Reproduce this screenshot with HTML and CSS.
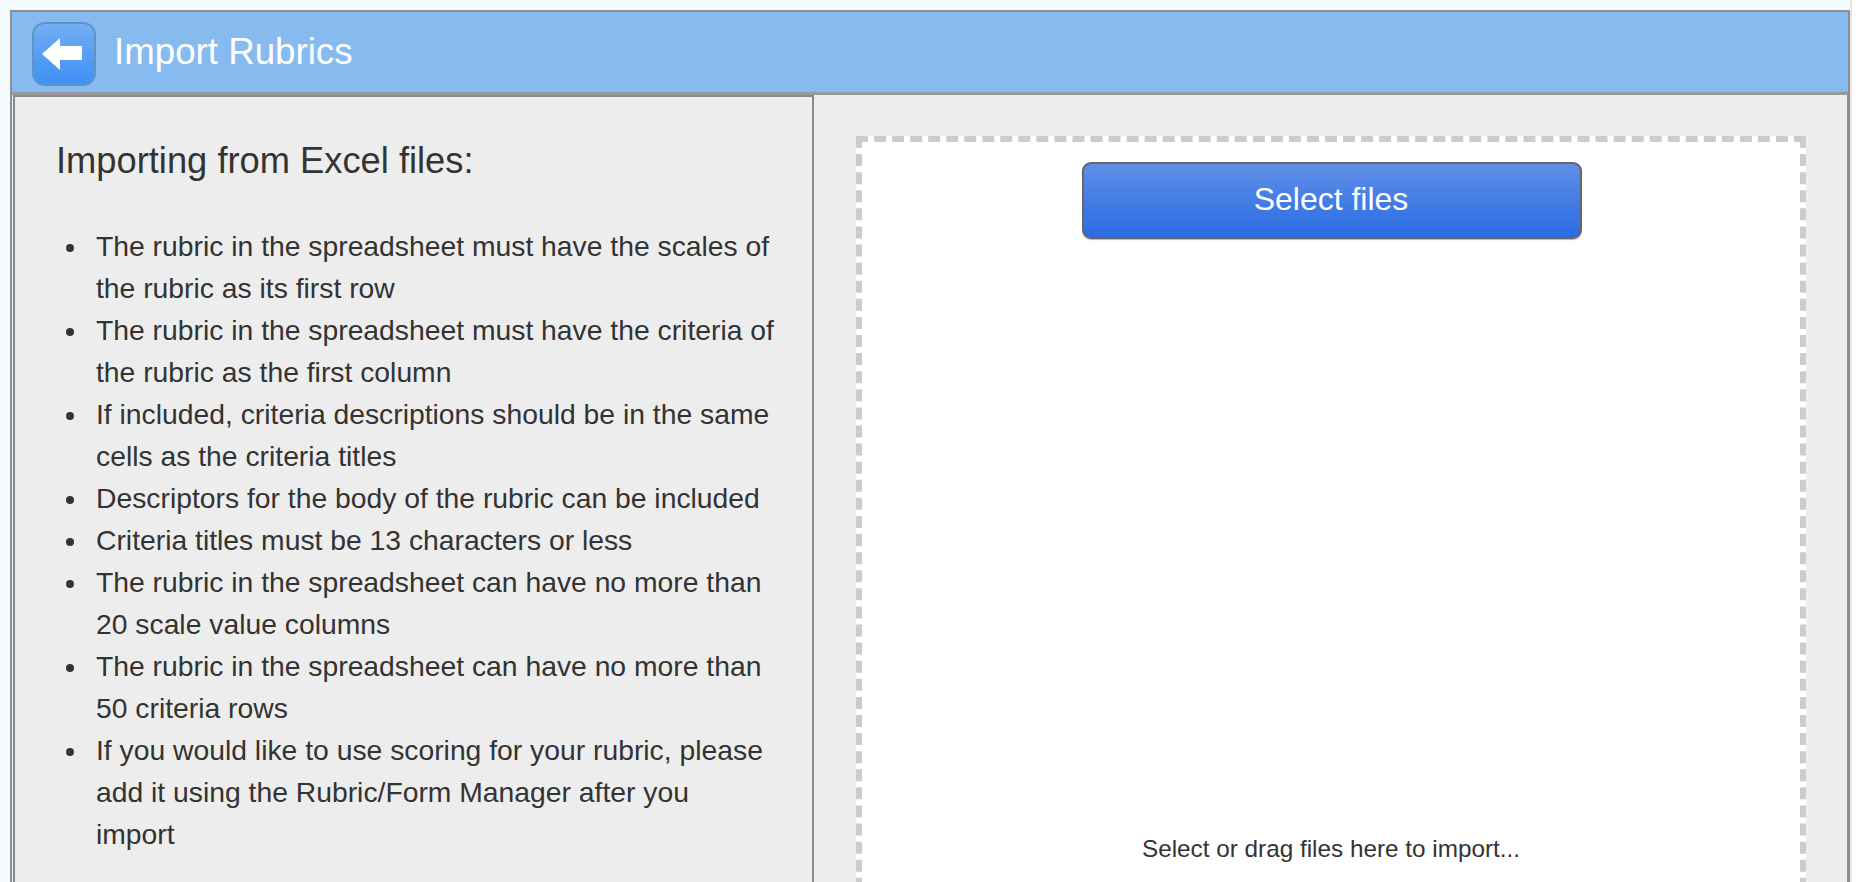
FILE: index.html
```html
<!DOCTYPE html>
<html lang="en">
<head>
<meta charset="utf-8">
<title>Import Rubrics</title>
<link rel="stylesheet" href="styles.css">
</head>
<body>
<div class="page">
<div class="window">
  <header class="titlebar">
    <button class="back" aria-label="Back">
      <svg width="40" height="32" viewBox="0 0 40 32"><path d="M0 16 L18 0 V8 H40 V22 H18 V32 Z" fill="#fff"/></svg>
    </button>
    <h1 class="title">Import Rubrics</h1>
  </header>
  <main class="content">
    <section class="help">
      <h2 class="help-title">Importing from Excel files:</h2>
      <ul class="rules">
        <li>The rubric in the spreadsheet must have the scales of the rubric as its first row</li>
        <li>The rubric in the spreadsheet must have the criteria of the rubric as the first column</li>
        <li>If included, criteria descriptions should be in the same cells as the criteria titles</li>
        <li>Descriptors for the body of the rubric can be included</li>
        <li>Criteria titles must be 13 characters or less</li>
        <li>The rubric in the spreadsheet can have no more than 20 scale value columns</li>
        <li>The rubric in the spreadsheet can have no more than 50 criteria rows</li>
        <li>If you would like to use scoring for your rubric, please add it using the Rubric/Form Manager after you<br>import</li>
      </ul>
    </section>
    <section class="import">
      <div class="dropzone">
        <button class="select">Select files</button>
        <p class="hint">Select or drag files here to import...</p>
      </div>
    </section>
  </main>
</div>
</div>
</body>
</html>
```
FILE: styles.css
```css
body {
  margin: 0;
  height: 882px;
  overflow: hidden;
  background: #fff;
  font-family: "Liberation Sans", Arial, sans-serif;
  color: #333;
}
.page {
  width: 1850px;
  height: 882px;
  background: #f5faff;
  border-right: 2px solid #e6e6e6;
  display: flex;
  flex-direction: column;
  overflow: hidden;
}
.window {
  margin: 10px 0 0 10px;
  height: 892px;
  flex: none;
  border: 2px solid #8e8e8e;
  border-bottom: 0;
  display: flex;
  flex-direction: column;
  background: #ededed;
}
.titlebar {
  height: 83px;
  flex: none;
  box-sizing: border-box;
  background: #87bbf0;
  border-bottom: 3px solid #999;
  display: flex;
  align-items: center;
  padding: 4px 0 0 20px;
  gap: 18px;
}
.back {
  width: 64px;
  height: 64px;
  padding: 0 0 0 8px;
  box-sizing: border-box;
  border: 2px solid #5d94c8;
  border-radius: 13px;
  background: linear-gradient(#72aef2, #3f90f5);
  display: flex;
  align-items: center;
  justify-content: flex-start;
}
.title {
  margin: 0 0 5px;
  font-size: 36.7px;
  font-weight: 400;
  color: #fff;
}
.content {
  flex: 1;
  display: flex;
  min-height: 0;
}
.help {
  width: 801px;
  flex: none;
  box-sizing: border-box;
  margin-left: 1px;
  border: 2px solid #8a8a8a;
  border-width: 2px 2px 0 2px;
  padding: 0 30px 0 41px;
}
.help-title {
  margin: 44px 0 0;
  font-size: 36.3px;
  line-height: 40px;
  font-weight: 400;
}
.rules {
  list-style: none;
  margin: 44px 0 0;
  padding: 0 0 0 40px;
  font-size: 28.3px;
  line-height: 42px;
}
.rules li {
  position: relative;
}
.rules li::before {
  content: "";
  position: absolute;
  left: -30px;
  top: 19px;
  width: 8px;
  height: 8px;
  border-radius: 50%;
  background: #333;
}
.import {
  flex: 1;
  padding: 41px 41px 0 42px;
  min-width: 0;
  border-right: 1px solid #8e8e8e;
}
.dropzone {
  height: 790px;
  box-sizing: border-box;
  border: 6px dashed #ccc;
  background: #fff;
  display: flex;
  flex-direction: column;
  align-items: center;
  padding-top: 20px;
}
.select {
  width: 500px;
  height: 77px;
  flex: none;
  box-sizing: border-box;
  margin-left: 2px;
  padding: 0 2px 2px 0;
  border: 2px solid #666;
  border-radius: 9px;
  background: linear-gradient(#5f8fe8, #2b6be2);
  box-shadow: 0 1px 1px rgba(0, 0, 0, .3);
  color: #fff;
  font: 400 32px "Liberation Sans", Arial, sans-serif;
  text-align: center;
}
.hint {
  margin: 595px 0 0;
  font-size: 24.3px;
  line-height: 30px;
}
```
